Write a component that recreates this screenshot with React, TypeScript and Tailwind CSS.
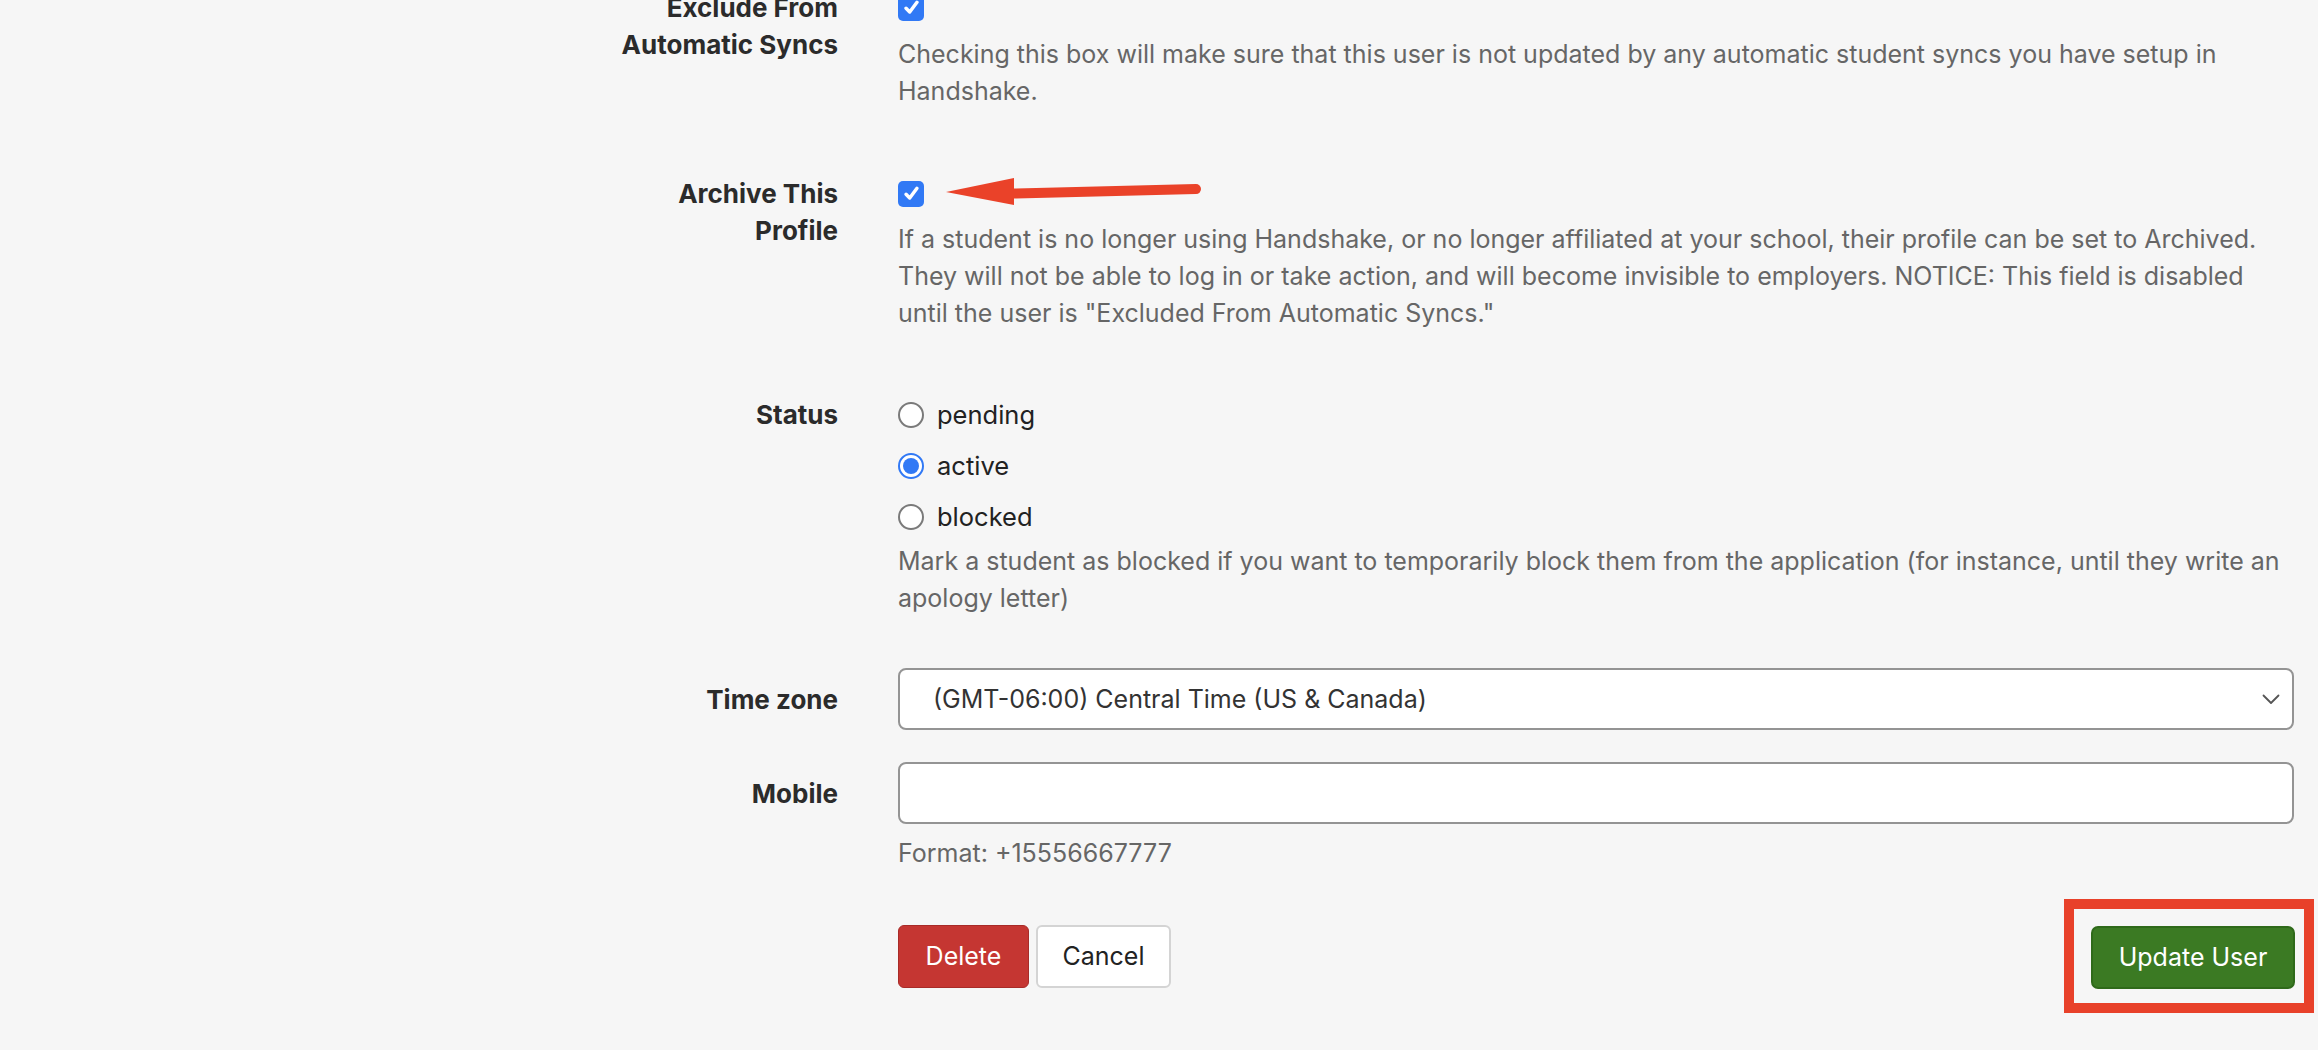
import React from 'react'

function CheckBox() {
  return (
    <span className="inline-flex h-[26px] w-[26px] items-center justify-center rounded-[5px] bg-[#3179f5]">
      <svg width="19" height="19" viewBox="0 0 16 16" aria-hidden>
        <path d="M3.4 8.6 L6.5 11.8 L12.6 3.6" fill="none" stroke="#fff" strokeWidth="2.9" strokeLinecap="round" strokeLinejoin="round" />
      </svg>
    </span>
  )
}

function Radio({ checked, label }: { checked?: boolean; label: string }) {
  return (
    <label className="flex h-[37px] items-center gap-[13px]">
      {checked ? (
        <span className="flex h-[26px] w-[26px] items-center justify-center rounded-full border-2 border-[#3179f5] bg-white">
          <span className="h-[16px] w-[16px] rounded-full bg-[#3179f5]" />
        </span>
      ) : (
        <span className="h-[26px] w-[26px] rounded-full border-2 border-[#7a7a7a] bg-white" />
      )}
      <span className="text-[25.5px] text-[#222]">{label}</span>
    </label>
  )
}

function Label({ children, className = '' }: { children: React.ReactNode; className?: string }) {
  return (
    <div className={`ml-[598px] w-[240px] shrink-0 text-right text-[26px] font-bold text-[#2b2b2b] ${className}`}>
      {children}
    </div>
  )
}

function Row({ label, children, className = '' }: { label: React.ReactNode; children: React.ReactNode; className?: string }) {
  return (
    <div className={`flex gap-[60px] ${className}`}>
      <Label>{label}</Label>
      <div className="min-w-0 flex-1">{children}</div>
    </div>
  )
}

export default function App() {
  return (
    <div className="h-[1050px] overflow-hidden bg-[#f6f6f6] pr-[24px] font-['Inter',sans-serif] text-[25px] leading-[37px]">
      <div className="-mt-[11px]">
        <Row label={<>Exclude From<br />Automatic Syncs</>}>
          <div className="flex h-[37px] items-center">
            <CheckBox />
          </div>
          <p className="mt-[10px] text-[#666]">
            Checking this box will make sure that this user is not updated by any automatic student syncs you have setup in Handshake.
          </p>
        </Row>

        <Row className="mt-[65px]" label={<>Archive This<br />Profile</>}>
          <div className="relative flex h-[37px] items-center">
            <CheckBox />
            <svg className="absolute left-[46px] top-[1px]" width="260" height="32" viewBox="0 0 260 32" aria-hidden>
              <path d="M70 17.5 L252 13" stroke="#ea4229" strokeWidth="10" strokeLinecap="round" />
              <polygon points="2,16 70,2 70,29" fill="#ea4229" />
            </svg>
          </div>
          <p className="mt-[9px] text-[#666]">
            If a student is no longer using Handshake, or no longer affiliated at your school, their profile can be set to Archived. They will not be able to log in or take action, and will become invisible to employers. NOTICE: This field is disabled until the user is "Excluded From Automatic Syncs."
          </p>
        </Row>

        <Row className="mt-[64px]" label="Status">
          <div className="flex flex-col gap-[14px]">
            <Radio label="pending" />
            <Radio checked label="active" />
            <Radio label="blocked" />
          </div>
          <p className="mt-[8px] text-[#666]">
            Mark a student as blocked if you want to temporarily block them from the application (for instance, until they write an apology letter)
          </p>
        </Row>

        <div className="mt-[51px] flex items-center gap-[60px]">
          <Label>Time zone</Label>
          <div className="flex h-[62px] min-w-0 flex-1 items-center justify-between rounded-[8px] border-2 border-[#949494] bg-white pl-[33px] pr-[12px] text-[#333]">
            <span>(GMT-06:00) Central Time (US &amp; Canada)</span>
            <svg width="18" height="11" viewBox="0 0 18 11" aria-hidden>
              <path d="M1.5 1.5 L9 9 L16.5 1.5" fill="none" stroke="#555" strokeWidth="1.8" strokeLinecap="round" strokeLinejoin="round" />
            </svg>
          </div>
        </div>

        <div className="mt-[32px] flex gap-[60px]">
          <Label className="flex h-[62px] items-center justify-end">Mobile</Label>
          <div className="min-w-0 flex-1">
            <div className="h-[62px] rounded-[8px] border-2 border-[#949494] bg-white" />
            <p className="mt-[11px] text-[#666]">Format: +15556667777</p>
          </div>
        </div>

        <div className="mt-[27px] flex gap-[60px]">
          <div className="ml-[598px] w-[240px] shrink-0" />
          <div className="flex min-w-0 flex-1 items-center justify-between">
            <div className="flex gap-[7px]">
              <button className="h-[63px] w-[131px] rounded-[6px] border border-[#a82b28] bg-[#c53632] text-white">Delete</button>
              <button className="h-[63px] w-[135px] rounded-[6px] border-2 border-[#d4d4d4] bg-white text-[#222]">Cancel</button>
            </div>
            <div className="-mr-[20px] border-[10px] border-[#e8412a] pb-[14px] pl-[17px] pr-[9px] pt-[17px]">
              <button className="h-[63px] w-[204px] rounded-[7px] border-2 border-[#2f6a1a] bg-[#3b7a23] text-white">Update User</button>
            </div>
          </div>
        </div>
      </div>
    </div>
  )
}
